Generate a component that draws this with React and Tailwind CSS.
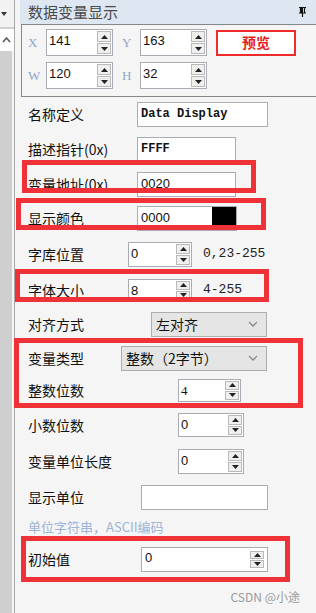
const cjk = { fontFamily: '"Noto Sans CJK SC", "Noto Sans", sans-serif' };
const mono = { fontFamily: '"Liberation Mono", "Noto Sans CJK SC", monospace' };
const sans = { fontFamily: '"Liberation Sans", Arial, sans-serif' };
const serif = { fontFamily: '"Liberation Serif", serif' };

function Arrows() {
  return (
    <div className="flex flex-col w-[15px] h-full py-[1px] pr-[1px] gap-[1px]">
      <div className="flex-1 bg-[#efefef] border border-[#b9b9b9] flex items-center justify-center">
        <svg width="7" height="4" viewBox="0 0 7 4"><path d="M0 4 L3.5 0 L7 4 Z" fill="#222" /></svg>
      </div>
      <div className="flex-1 bg-[#efefef] border border-[#b9b9b9] flex items-center justify-center">
        <svg width="7" height="4" viewBox="0 0 7 4"><path d="M0 0 L3.5 4 L7 0 Z" fill="#222" /></svg>
      </div>
    </div>
  );
}

function Spin({ value, size, font = sans }) {
  return (
    <div className={`flex bg-white border border-[#a9acb2] shrink-0 ${size}`}>
      <div className="flex-1 pl-[2px] text-[13px] leading-none pt-[4px] text-[#111]" style={font}>
        {value}
      </div>
      <Arrows />
    </div>
  );
}

function Field({ value, w, font = sans, text = "text-[13px]", children }) {
  return (
    <div className={`h-[25px] bg-white border border-[#a9acb2] flex items-center relative shrink-0 ${w}`}>
      <span className={`pl-[3px] ${text} text-[#111]`} style={font}>{value}</span>
      {children}
    </div>
  );
}

function Select({ value, w }) {
  return (
    <div className={`h-[25px] bg-[#e5e5e5] border border-[#adadad] flex items-center justify-between pl-[4px] pr-[8px] shrink-0 ${w}`}>
      <span className="text-[14px] text-[#111]" style={cjk}>{value}</span>
      <svg width="10" height="6" viewBox="0 0 10 6"><path d="M1 1 L5 5 L9 1" stroke="#8a8a8a" strokeWidth="1.3" fill="none" /></svg>
    </div>
  );
}

function Row({ h, lw, label, children }) {
  return (
    <div className={`flex items-center pl-[13px] shrink-0 ${h}`}>
      <span className={`text-[14px] text-[#111] whitespace-nowrap shrink-0 ${lw}`} style={cjk}>{label}</span>
      {children}
    </div>
  );
}

export default function App() {
  return (
    <div className="w-[316px] h-[613px] relative overflow-hidden bg-[#f5f5f5] flex">
      {/* left strip */}
      <div className="w-[15px] flex flex-col border-r border-[#a8a8a8] shrink-0">
        <div className="h-[29px] bg-[#f2f2f2] border-b-2 border-[#d0d0d0] flex items-center pl-[1px]">
          <svg width="6" height="4" viewBox="0 0 6 4"><path d="M0 0 L3 4 L6 0 Z" fill="#333" /></svg>
        </div>
        <div className="h-[22px] bg-white flex items-center pl-[2px]">
          <svg width="9" height="6" viewBox="0 0 9 6"><path d="M1 5 L4.5 1 L8 5" stroke="#555" strokeWidth="1.5" fill="none" /></svg>
        </div>
        <div className="flex-1 bg-[#cfcfcf] mr-[2px]" />
      </div>

      {/* main panel */}
      <div className="flex-1 flex flex-col">
        <div className="ml-[5px] h-[24px] bg-[#dde6f1] flex items-center justify-between pl-[8px] pr-[10px] shrink-0">
          <span className="text-[15px] text-[#4a4a4a]" style={cjk}>数据变量显示</span>
          <svg width="7" height="10" viewBox="0 0 7 10">
            <path d="M0 0.5 H7 M1.5 0.5 V6 H5.5 V0.5 M0 6 H7 M3.5 6 V10" stroke="#111" strokeWidth="1.2" fill="none" />
            <rect x="2" y="1" width="2" height="5" fill="#111" />
          </svg>
        </div>

        <div className="ml-[6px] h-[73px] border border-r-0 border-[#868686] flex flex-col gap-[6px] pt-[4px] pl-[6px] shrink-0">
          <div className="flex items-center">
            <span className="w-[18px] text-[13px] text-[#8fa6cc]" style={serif}>X</span>
            <Spin value="141" size="w-[67px] h-[27px]" />
            <span className="w-[27px] pl-[9px] text-[13px] text-[#8fa6cc]" style={serif}>Y</span>
            <Spin value="163" size="w-[67px] h-[27px]" />
            <div className="ml-[9px] w-[80px] h-[26px] border-2 border-[#ee2a2a] bg-white flex items-center justify-center">
              <span className="text-[14px] font-bold text-[#e81c1c]" style={cjk}>预览</span>
            </div>
          </div>
          <div className="flex items-center">
            <span className="w-[18px] text-[13px] text-[#8fa6cc]" style={serif}>W</span>
            <Spin value="120" size="w-[67px] h-[27px]" />
            <span className="w-[27px] pl-[9px] text-[13px] text-[#8fa6cc]" style={serif}>H</span>
            <Spin value="32" size="w-[67px] h-[27px]" />
          </div>
        </div>

        <Row h="h-[34px]" lw="w-[109px]" label="名称定义">
          <Field value="Data Display" w="w-[131px]" font={mono} text="text-[12px] font-bold" />
        </Row>
        <Row h="h-[36px]" lw="w-[109px]" label="描述指针(0x)">
          <Field value="FFFF" w="w-[99px]" font={mono} text="text-[12px] font-bold" />
        </Row>
        <Row h="h-[34px]" lw="w-[109px]" label="变量地址(0x)">
          <Field value="0020" w="w-[99px]" />
        </Row>
        <Row h="h-[34px]" lw="w-[109px]" label="显示颜色">
          <Field value="0000" w="w-[100px]">
            <div className="absolute right-0 top-0 bottom-0 w-[24px] bg-black" />
          </Field>
        </Row>
        <Row h="h-[38px]" lw="w-[100px]" label="字库位置">
          <Spin value="0" size="w-[64px] h-[25px]" />
          <span className="ml-[11px] text-[13px] text-[#222]" style={mono}>0,23-255</span>
        </Row>
        <Row h="h-[34px]" lw="w-[100px]" label="字体大小">
          <Spin value="8" size="w-[64px] h-[23px]" />
          <span className="ml-[11px] text-[13px] text-[#222]" style={mono}>4-255</span>
        </Row>
        <Row h="h-[34px]" lw="w-[123px]" label="对齐方式">
          <Select value="左对齐" w="w-[116px]" />
        </Row>
        <Row h="h-[34px]" lw="w-[93px]" label="变量类型">
          <Select value="整数（2字节）" w="w-[146px]" />
        </Row>
        <Row h="h-[30px]" lw="w-[150px]" label="整数位数">
          <Spin value="4" size="w-[63px] h-[23px]" font={serif} />
        </Row>
        <Row h="h-[40px]" lw="w-[150px]" label="小数位数">
          <Spin value="0" size="w-[66px] h-[24px]" />
        </Row>
        <Row h="h-[32px]" lw="w-[150px]" label="变量单位长度">
          <Spin value="0" size="w-[66px] h-[25px]" />
        </Row>
        <Row h="h-[40px]" lw="w-[113px]" label="显示单位">
          <Field value="" w="w-[127px]" />
        </Row>
        <div className="h-[20px] pl-[13px] flex items-center shrink-0">
          <span className="text-[13px] text-[#9bb4d6]" style={cjk}>单位字符串，ASCII编码</span>
        </div>
        <Row h="h-[44px]" lw="w-[113px]" label="初始值">
          <div className="w-[127px] h-[25px] bg-white border border-[#a9acb2] flex">
            <span className="flex-1 pl-[3px] text-[13px] pt-[3px] leading-none text-[#111]" style={sans}>0</span>
            <div className="py-[2px] pr-[2px] flex">
              <Arrows />
            </div>
          </div>
        </Row>
        <div className="h-[32px] flex items-center justify-end pr-[16px] shrink-0">
          <span className="text-[12px] text-[#9a9a9a]" style={cjk}>CSDN @小途</span>
        </div>
      </div>

      {/* red annotation boxes */}
      <div className="absolute left-[22px] top-[160px] w-[234px] h-[33px] border-[5px] border-[#ee3237]" />
      <div className="absolute left-[16px] top-[198px] w-[250px] h-[32px] border-[5px] border-[#ee3237]" />
      <div className="absolute left-[15px] top-[269px] w-[254px] h-[33px] border-[5px] border-[#ee3237]" />
      <div className="absolute left-[14px] top-[338px] w-[289px] h-[70px] border-[5px] border-[#ee3237]" />
      <div className="absolute left-[21px] top-[536px] w-[269px] h-[46px] border-[5px] border-[#ee3237]" />
    </div>
  );
}
